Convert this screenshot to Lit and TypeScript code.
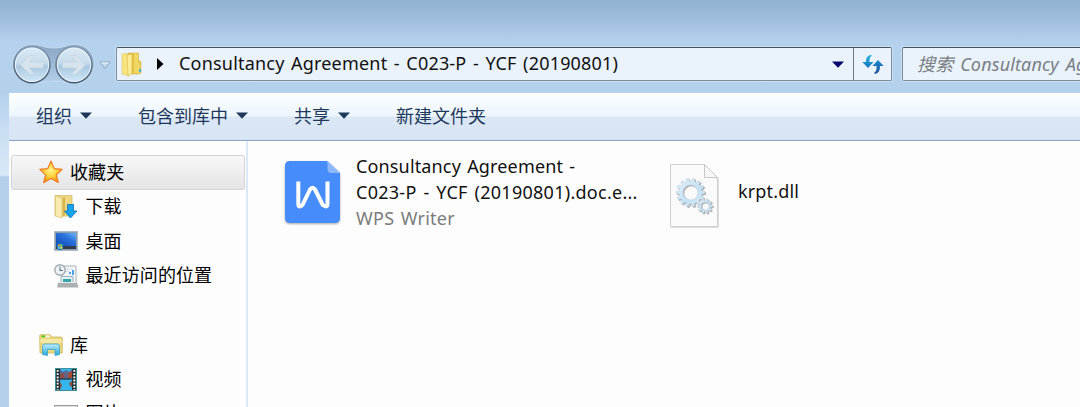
import { LitElement, html, svg, css } from "lit";
import { customElement } from "lit/decorators.js";

const gear = (cx: number, cy: number, r: number, teeth: number, depth: number) => {
  const pts: string[] = [];
  for (let i = 0; i < teeth; i++) {
    for (const [o, rad] of [[-0.3, r - depth], [-0.18, r], [0.18, r], [0.3, r - depth]]) {
      const a = ((i + o) / teeth) * Math.PI * 2;
      pts.push(`${(cx + Math.cos(a) * rad).toFixed(2)},${(cy + Math.sin(a) * rad).toFixed(2)}`);
    }
  }
  const h = r * 0.53;
  return `M${pts.join("L")}ZM${cx - h},${cy}a${h},${h} 0 1 0 ${2 * h},0a${h},${h} 0 1 0 ${-2 * h},0Z`;
};

const navButtons = html`<svg class="nav" width="90" height="44" viewBox="0 0 90 44">
  <defs>
    <linearGradient id="ball" x1="0" y1="0" x2="0" y2="1">
      <stop offset="0" stop-color="#dceaf5"/><stop offset=".45" stop-color="#c6dbeb"/>
      <stop offset=".55" stop-color="#a9c8e0"/><stop offset="1" stop-color="#d3e9f8"/>
    </linearGradient>
    <linearGradient id="ring" x1="0" y1="0" x2="0" y2="1">
      <stop offset="0" stop-color="#8299b0"/><stop offset="1" stop-color="#46576d"/>
    </linearGradient>
    <linearGradient id="well" x1="0" y1="0" x2="0" y2="1">
      <stop offset="0" stop-color="#87a5c2"/><stop offset="1" stop-color="#b3cfe8"/>
    </linearGradient>
  </defs>
  <path d="M22 2.5C31 2.5 34 6 44 6S57 2.5 65 2.5A19.5 19.5 0 0 1 65 41.500C57 41.500 52 39 44 39S31 41.500 22 41.500A19.500 19.500 0 0 1 22 2.500Z" fill="url(#well)" stroke="#c4dbef" stroke-width="1"/>
  ${[22, 64].map((x) => svg`<circle cx=${x} cy="22.800" r="18" fill="url(#ball)" stroke="url(#ring)" stroke-width="1.500"/>
    <circle cx=${x} cy="22.800" r="16.600" fill="none" stroke="#e6f2fb" stroke-width="1"/>`)}
  <g fill="#d6e3ed" stroke="#c0d2e0" stroke-width=".6" stroke-linejoin="round">
    <path d="M10.500 23L20 13.500H25L19.500 20H33.500V26H19.500L25 32.500H20Z"/>
    <path d="M75.500 23L66 13.500H61L66.500 20H52.500V26H66.500L61 32.500H66Z"/>
  </g>
</svg>`;

const historyArrow = html`<svg width="12" height="9" viewBox="0 0 12 9"><path d="M1 1H11L6 7.500Z" fill="#c6daec" stroke="#8ca6be"/><path d="M2.500 2H9.500" stroke="#edf6fd"/></svg>`;

const folder = html`<svg class="folder" width="21" height="25" viewBox="0 0 21 25">
  <defs><linearGradient id="fy" x1="0" x2="1"><stop offset="0" stop-color="#f5df75"/><stop offset=".5" stop-color="#fff3a8"/><stop offset="1" stop-color="#e3bd35"/></linearGradient></defs>
  <path d="M7 1H17.500V8L20 10V21.500L17 22H7Z" fill="#e5c33f" stroke="#d6b75d" stroke-width=".6"/>
  <path d="M13 1.500H17V21H13Z" fill="#f0d763"/>
  <path d="M1 2L6 1.500L8 24L1 22Z" fill="#f7e680" stroke="#dcc265" stroke-width=".6"/>
  <path d="M6 3L12 2V21L7 24Z" fill="url(#fy)" stroke="#d5b64b" stroke-width=".5"/>
  <path d="M18 11V21" stroke="#f7e99b"/><path d="M18 17h2v3h-2z" fill="#46b6c4"/>
</svg>`;

const refresh = html`<svg width="22" height="21" viewBox="0 0 22 21">
  <defs><linearGradient id="rf" x1="0" y1="0" x2="0" y2="1"><stop offset="0" stop-color="#2bb7e4"/><stop offset="1" stop-color="#1271b8"/></linearGradient>
  <linearGradient id="rg" x1="0" y1="0" x2="0" y2="1"><stop offset="0" stop-color="#168bd0"/><stop offset="1" stop-color="#25509c"/></linearGradient></defs>
  <path d="M9.500 1C6 1 4 3 4 8H.3L6 14L11.500 8H7.500C7.300 5 7.800 3 9.500 2Z" fill="url(#rf)"/>
  <path d="M12.500 20C16.500 19.500 18 17 18 12H21.700L16 6L10.500 12H14.500C14.700 15.500 14.300 17.500 12.500 18.500Z" fill="url(#rg)"/>
</svg>`;

const star = html`<svg width="24" height="24" viewBox="0 0 24 24">
  <defs><radialGradient id="st" cx=".48" cy=".42" r=".55"><stop offset="0" stop-color="#fff78e"/><stop offset=".55" stop-color="#ffd03c"/><stop offset="1" stop-color="#ff9210"/></radialGradient></defs>
  <path d="M12 1L15.200 8.600L23.200 9.400L17.200 14.700L19.300 22.500L12 18.400L4.600 22.700L6.600 14.900L.8 9.400L8.800 8.600Z" fill="url(#st)" stroke="#ee7d23" stroke-width="1.200" stroke-linejoin="round"/>
</svg>`;

const downloads = html`<svg width="24" height="25" viewBox="0 0 24 25">
  <path d="M1 1.500H18V22H1Z" fill="#f0d883" stroke="#d5bd6c" stroke-width=".8"/>
  <path d="M1.500 2L8 4V24L1.500 22Z" fill="#f9ebad" stroke="#d8c276" stroke-width=".7"/>
  <path d="M8.500 4V23L11 21V3Z" fill="#d8b650"/>
  <path d="M13.500 10.500H19.500V17H23L16.500 24L10.500 17H13.500Z" fill="#16a3ef" stroke="#1677b8" stroke-width=".9"/>
</svg>`;

const desktop = html`<svg width="24" height="20" viewBox="0 0 24 20">
  <defs><linearGradient id="dk" x1="0" y1="1" x2="1" y2="0"><stop offset="0" stop-color="#1145b8"/><stop offset=".6" stop-color="#2a72dc"/><stop offset="1" stop-color="#6bb4fa"/></linearGradient></defs>
  <rect x=".5" y=".5" width="23" height="19" fill="#8d9dad" stroke="#aebac6"/>
  <rect x="2" y="2" width="20" height="13" fill="url(#dk)"/>
  <rect x="2" y="15" width="20" height="3" fill="#343d49"/>
  <circle cx="6" cy="15.500" r="3.400" fill="#1476b9"/>
  <path d="M4 13.500h2v2H4z" fill="#f4a02a"/><path d="M6.300 13.500h2v2h-2z" fill="#86dc54"/><path d="M4 15.800h2v2H4z" fill="#57c8f8"/><path d="M6.300 15.800h2v2h-2z" fill="#ffe055"/>
</svg>`;

const recent = html`<svg width="25" height="24" viewBox="0 0 25 24">
  <path d="M8 2H22V19H8Z" fill="#f5f8fa" stroke="#a9afb4"/>
  <path d="M11 5h8M11 7.500h4" stroke="#d2dae0"/><path d="M15 8h2v2h-2zM18 6h2v5h-2z" fill="#4aa5e8"/>
  <path d="M7 12.500H19V20H7Z" fill="#e3f0f5" stroke="#9bb0ba"/><path d="M9 15h8v3H9z" fill="#35a7ad"/>
  <path d="M4 18.500H23L24.500 23.500H3Z" fill="#adb0b3"/><path d="M5 18.500H22" stroke="#e8e9ea"/>
  <circle cx="6" cy="6" r="5.200" fill="#edf3f6" stroke="#a1a9af" stroke-width="1.400"/>
  <path d="M6 2.500V6.500H9" fill="none" stroke="#5a7482" stroke-width="1.100"/>
</svg>`;

const library = html`<svg width="24" height="22" viewBox="0 0 24 22">
  <defs><linearGradient id="lb" x1="0" y1="0" x2="0" y2="1"><stop offset="0" stop-color="#bdeefc"/><stop offset="1" stop-color="#25a6da"/></linearGradient></defs>
  <path d="M.7 1.500Q.7.7 1.500.7H11L13 3H22.500L23.300 4V19H1Z" fill="#ead77e" stroke="#cdb960" stroke-width=".8"/>
  <path d="M2.500 1.500h4v1.700h-4z" fill="#48c51f"/><path d="M6.500 1.500h4v1.700h-4z" fill="#fff"/>
  <path d="M1.500 5H22.500V9H1.500Z" fill="#f5e8a5"/>
  <path d="M3.500 20.500V12Q3.500 10 6 10H18Q20.500 10 20.500 12V20.500L16 21.500V15.500H8.500V21.500Z" fill="url(#lb)" stroke="#2ba1cb" stroke-width=".7"/>
</svg>`;

const video = html`<svg width="22" height="23" viewBox="0 0 22 23">
  <rect x=".5" y=".5" width="21" height="22" fill="#253336" stroke="#3c9298"/>
  <rect x="5" y="1" width="12" height="21" fill="#37b5ee"/>
  <path d="M5 1L8 4L11 2L14 4L17 1V9L14 11H9L5 9Z" fill="#596a94"/><path d="M13 5L17 3V10H13Z" fill="#a84b36"/>
  <path d="M5 6L9 5L10 9L7 11H5Z" fill="#8d4d48"/>
  <path d="M5 11H17" stroke="#26343b" stroke-width="1.300"/>
  <path d="M5 14L7 17L6 20L5 21ZM17 13L14 15L15 18L17 19Z" fill="#875246"/>
  <path d="M2.700 2V22M19.300 2V22" stroke="#f5fbfb" stroke-width="1.900" stroke-dasharray="1.800 1.400"/>
</svg>`;

const pictures = html`<svg width="24" height="18" viewBox="0 0 24 18"><rect x=".5" y=".5" width="23" height="17" fill="#e0e0e0" stroke="#999"/><path d="M3 4H21V15H3Z" fill="#6eb2dc"/></svg>`;

const wps = html`<svg class="wps" width="59" height="68" viewBox="0 0 59 68">
  <path d="M7 1H44L57 13V58Q57 63 52 63H7Q2 63 2 58V6Q2 1 7 1Z" fill="#468cfa"/>
  <path d="M44.500 1L57 13H48.500Q44.500 13 44.500 9Z" fill="#8db8fc"/>
  <path d="M15.300 21.500V43.500Q15.300 48.500 19.500 45L27 29.500Q29.500 26 32 29.500L39.800 45Q44.500 48.500 44.500 43.500V21.500" fill="none" stroke="#fff" stroke-width="4" stroke-linejoin="round"/>
</svg>`;

const dll = html`<svg class="dll" width="52" height="66" viewBox="0 0 52 66">
  <defs><linearGradient id="gr" x1="0" y1="0" x2="1" y2="1"><stop offset="0" stop-color="#e4f1f9"/><stop offset=".6" stop-color="#c3e1f5"/><stop offset="1" stop-color="#e0f1fa"/></linearGradient></defs>
  <path d="M1.500 1.500H35.500L48.500 14.500V63.500H1.500Z" fill="#fafafa" stroke="#cfcfcf"/>
  <path d="M2 64.500H49.500V15" fill="none" stroke="#dedede"/>
  <path d="M35.500 1.500V14.500H48.500Z" fill="#f6f6f6" stroke="#c8c8c8"/>
  <g class="gears" fill="url(#gr)" stroke="#bccfdc" stroke-width=".6" fill-rule="evenodd">
    <path d=${gear(21.5, 29.5, 14.2, 14, 2.8)}/>
    <path d=${gear(36, 43, 7.4, 10, 1.8)}/>
  </g>
</svg>`;

const caret = html`<svg class="caret" width="12" height="7" viewBox="0 0 12 7"><path d="M0 .5H12L6 6.700Z" fill="currentColor"/></svg>`;

@customElement("app-root")
export class AppRoot extends LitElement {
  static styles = css`
    :host { display: block; height: 407px; overflow: hidden; }
    * { box-sizing: border-box; }
    svg { display: block; flex: none; }
    .window {
      width: 1080px; height: 407px; overflow: hidden; display: flex; flex-direction: column;
      font: 18px/26px "Noto Sans", "Noto Sans CJK SC", sans-serif; color: #111; white-space: nowrap;
      background: linear-gradient(#91b2d0 0, #98b8d6 12px, #b4d1ed 42px, #b4d1ec 93px, #c8def3 130px, #dae8f7 175px, #b4d1ec 177px);
    }
    .top { flex: none; height: 93px; padding: 47px 0 0 10px; display: flex; align-items: flex-start; }
    .nav { margin-top: -5px; }
    .hist { width: 17px; flex: none; padding-top: 14px; margin-left: -1px; }
    .box {
      height: 34px; border: 1px solid #7f8b97; border-top-color: #4b5158; border-radius: 2px;
      background: #eaf2fb; box-shadow: 0 0 0 1px #c9dff3; display: flex; align-items: center; flex: none;
    }
    .address { width: 776px; }
    .folder { margin-left: 4px; }
    .crumb { margin: 0 15px 0 14px; color: #000; }
    .path { flex: 1; letter-spacing: .2px; word-spacing: 1.6px; padding-bottom: 2px; }
    .drop { color: #05056e; margin-right: 9px; }
    .refresh { width: 38px; align-self: stretch; border-left: 1px solid #70777e; display: flex; align-items: center; justify-content: center; }
    .search { margin-left: 10px; width: 270px; padding: 0 0 1px 14px; font-style: italic; color: #7a7f84; letter-spacing: .15px; word-spacing: 2px; }
    .body { flex: 1; margin-left: 9px; display: flex; flex-direction: column; min-height: 0; background: #fdfdfd; }
    .tools {
      flex: none; height: 48px; padding: 0 0 2px 27px; display: flex; align-items: center; gap: 46px; color: #1e395b;
      border-top: 1px solid #fff; border-bottom: 1px solid #8fa6c8;
      background: linear-gradient(#fcfeff, #ecf6fd 22px, #dbe7f5 23px, #d8e5f5 43px, #dde9f6 45px, #c1d2e6 46px);
    }
    .tool { display: flex; align-items: center; gap: 8px; }
    .tool .caret { margin-top: -1px; }
    .main { flex: 1; display: flex; min-height: 0; }
    .side { width: 239px; flex: none; border-right: 2px solid #dbe8f7; padding: 14px 1px 0 2px; overflow: hidden; }
    .row { height: 34.5px; display: flex; align-items: center; border: 1px solid transparent; border-radius: 3px; }
    .row.on { border-color: #d5d5d5; background: linear-gradient(#f7f7f7, #e5e5e5); }
    .ico { width: 24px; margin-left: 27px; display: flex; justify-content: center; }
    .sub .ico { margin-left: 42px; }
    .label { margin-left: 7px; color: #000; letter-spacing: .1px; }
    .sub .label { margin-left: 7.5px; padding-bottom: 1px; }
    .space { height: 34.5px; }
    .files { display: flex; padding: 12px 0 0 35px; align-items: flex-start; }
    .wps { margin-top: 7px; filter: drop-shadow(0 1px 1px #aaa); }
    .name { margin-left: 14px; width: 313px; color: #111; }
    .l1 { letter-spacing: .15px; word-spacing: 1.4px; }
    .l2 { letter-spacing: .27px; word-spacing: 1.9px; }
    .dll { margin-top: 10px; }
    .gears { filter: drop-shadow(1px 1px .6px #aaa); }
    .file { display: flex; }
    .kind { color: #7b7b7b; letter-spacing: .25px; word-spacing: 1.5px; }
    .krpt { margin: 25px 0 0 17px; letter-spacing: .15px; color: #111; }
    .gap { width: 5px; flex: none; }
  `;

  private row(icon: unknown, label: string, cls: string) {
    return html`<div class="row ${cls}"><span class="ico">${icon}</span><span class="label">${label}</span></div>`;
  }

  render() {
    return html`<div class="window">
      <div class="top">
        ${navButtons}
        <div class="hist">${historyArrow}</div>
        <div class="box address" style="">
          ${folder}
          <svg class="crumb" width="8" height="12" viewBox="0 0 8 12"><path d="M1 0L7.500 6L1 12Z"/></svg>
          <span class="path">Consultancy Agreement - C023-P - YCF (20190801)</span>
          <span class="drop">${caret}</span>
          <span class="refresh">${refresh}</span>
        </div>
        <div class="box search">搜索 Consultancy Agreement</div>
      </div>
      <div class="body">
        <div class="tools">
          <span class="tool">组织${caret}</span>
          <span class="tool">包含到库中${caret}</span>
          <span class="tool">共享${caret}</span>
          <span class="tool">新建文件夹</span>
        </div>
        <div class="main">
          <div class="side">
            ${this.row(star, "收藏夹", "on")}
            ${this.row(downloads, "下载", "sub")}
            ${this.row(desktop, "桌面", "sub")}
            ${this.row(recent, "最近访问的位置", "sub")}
            <div class="space"></div>
            ${this.row(library, "库", "")}
            ${this.row(video, "视频", "sub")}
            ${this.row(pictures, "图片", "sub")}
          </div>
          <div class="files">
            <div class="file">${wps}
              <div class="name">
                <div class="l1">Consultancy Agreement -</div>
                <div class="l2">C023-P - YCF (20190801).doc.e...</div>
                <div class="kind">WPS Writer</div>
              </div>
            </div>
            <div class="file">${dll}<div class="krpt">krpt.dll</div></div>
          </div>
        </div>
      </div>
    </div>`;
  }
}
